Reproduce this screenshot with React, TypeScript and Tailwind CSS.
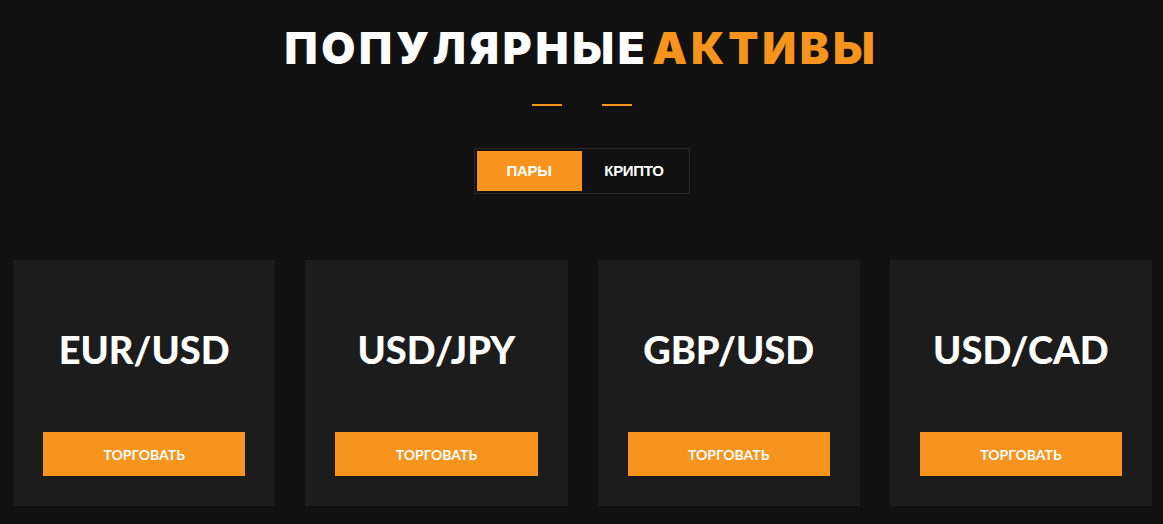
import React, { useState } from 'react';

const pairs = ['EUR/USD', 'USD/JPY', 'GBP/USD', 'USD/CAD'];

const AssetCard: React.FC<{ name: string }> = ({ name }) => (
  <div className="h-[246px] bg-[#1c1c1c] flex flex-col items-center px-[30px] pt-[70px]">
    <div className="font-['Lato',sans-serif] font-black text-[38px] leading-none text-white">{name}</div>
    <button className="mt-[64px] w-full h-[44px] bg-[#f7941d] text-white font-['Lato',sans-serif] font-bold text-[14px]">
      ТОРГОВАТЬ
    </button>
  </div>
);

export default function App() {
  const [tab, setTab] = useState<'pairs' | 'crypto'>('pairs');

  return (
    <div className="w-full min-h-[524px] bg-[#111111] pt-[26px]">
      {/* Heading */}
      <h2 className="text-center font-['Inter',sans-serif] font-black text-[44px] leading-none tracking-[3.8px] [word-spacing:-9px] text-white">
        ПОПУЛЯРНЫЕ <span className="text-[#f7941d]">АКТИВЫ</span>
      </h2>

      <div className="flex justify-center gap-[40px] mt-[34px]">
        <span className="block w-[30px] h-[2px] bg-[#f7941d]" />
        <span className="block w-[30px] h-[2px] bg-[#f7941d]" />
      </div>

      {/* Tabs */}
      <div className="flex justify-center mt-[42px]">
        <div className="flex border border-[#2a2a2a] p-[2px]">
          <button
            onClick={() => setTab('pairs')}
            className={`w-[105px] h-[40px] font-['Liberation_Sans',sans-serif] font-bold text-[15px] tracking-[-0.3px] text-white ${tab === 'pairs' ? 'bg-[#f7941d]' : ''}`}
          >
            ПАРЫ
          </button>
          <button
            onClick={() => setTab('crypto')}
            className={`w-[105px] h-[40px] font-['Liberation_Sans',sans-serif] font-bold text-[15px] tracking-[-0.3px] text-white ${tab === 'crypto' ? 'bg-[#f7941d]' : ''}`}
          >
            КРИПТО
          </button>
        </div>
      </div>

      {/* Cards */}
      <div className="grid grid-cols-4 gap-[30px] pl-[13px] pr-[11px] mt-[66px]">
        {pairs.map((p) => (
          <AssetCard key={p} name={p} />
        ))}
      </div>
    </div>
  );
}
